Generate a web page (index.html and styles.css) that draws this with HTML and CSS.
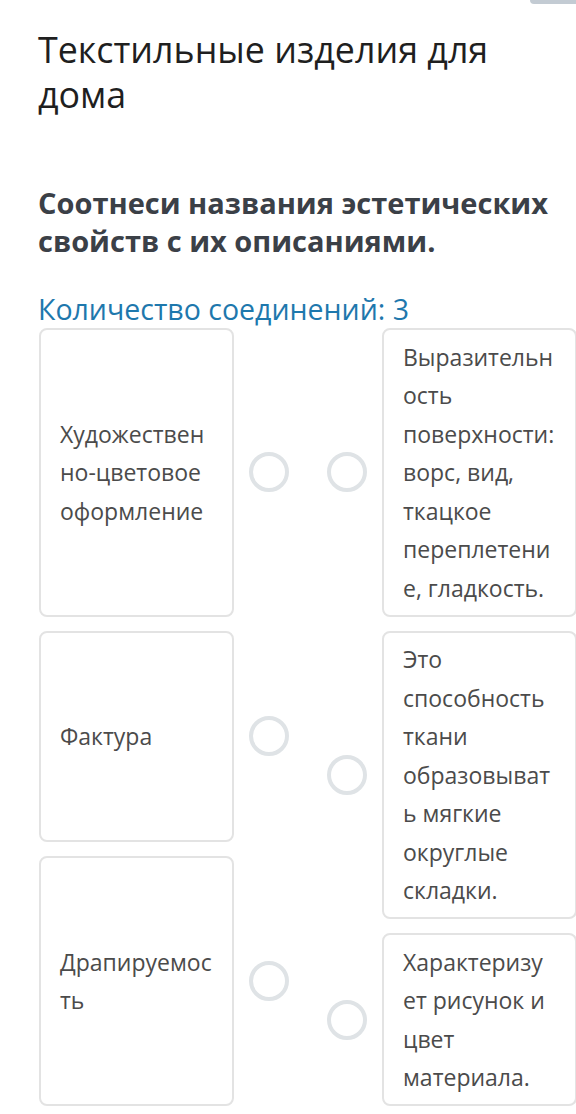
FILE: index.html
```html
<!DOCTYPE html>
<html lang="ru">
<head>
<meta charset="utf-8">
<link rel="stylesheet" href="styles.css">
</head>
<body>
<div class="page">
  <div class="topbar"><div class="tab"></div></div>
  <h1 class="title">Текстильные изделия для дома</h1>
  <h2 class="task">Соотнеси названия эстетических свойств с их описаниями.</h2>
  <div class="count">Количество соединений: 3</div>
  <div class="board">
    <div class="col">
      <div class="item">
        <div class="card"><span>Художественно-цветовое оформление</span></div>
        <div class="dot"></div>
      </div>
      <div class="item">
        <div class="card"><span>Фактура</span></div>
        <div class="dot"></div>
      </div>
      <div class="item">
        <div class="card"><span>Драпируемость</span></div>
        <div class="dot"></div>
      </div>
    </div>
    <div class="col col-right">
      <div class="item">
        <div class="dot"></div>
        <div class="card"><span>Выразительность поверхности: ворс, вид, ткацкое переплетение, гладкость.</span></div>
      </div>
      <div class="item">
        <div class="dot"></div>
        <div class="card"><span>Это способность ткани образовывать мягкие округлые складки.</span></div>
      </div>
      <div class="item">
        <div class="dot"></div>
        <div class="card"><span>Характеризует рисунок и цвет материала.</span></div>
      </div>
    </div>
  </div>
</div>
</body>
</html>
```

FILE: styles.css
```css
html, body {
  margin: 0;
  padding: 0;
  background: #ffffff;
}
body {
  font-family: "Open Sans", "Noto Sans", sans-serif;
  width: 576px;
  overflow: hidden;
}
.page {
  padding: 0 0 8px 38px;
}
.topbar {
  display: flex;
  justify-content: flex-end;
  height: 4px;
}
.tab {
  width: 46px;
  height: 4px;
  background: #c3cbd3;
  border-bottom-left-radius: 6px;
}
.title {
  margin: 23px 0 0 0;
  font-size: 35.8px;
  line-height: 45px;
  font-weight: 400;
  color: #1f1f1f;
  width: 510px;
}
.task {
  margin: 67px 0 0 0;
  font-size: 29px;
  line-height: 37.5px;
  font-weight: 700;
  color: #3b4047;
  width: 530px;
}
.count {
  margin-top: 33px;
  font-size: 28.5px;
  line-height: 34px;
  color: #1e78ad;
}
.board {
  display: flex;
  gap: 38px;
  margin-top: 2px;
  margin-left: 1px;
}
.col {
  display: flex;
  flex-direction: column;
  gap: 14px;
  width: 250px;
  flex: none;
}
.item {
  flex: 1 1 auto;
  display: flex;
  align-items: center;
  gap: 15px;
}
.card {
  align-self: stretch;
  width: 195px;
  box-sizing: border-box;
  flex: none;
  border: 2px solid #e3e3e3;
  border-radius: 8px;
  padding: 7.5px 17px 7.5px 19px;
  display: flex;
  align-items: center;
  font-size: 23px;
  line-height: 38.5px;
  color: #4b4b4b;
  overflow-wrap: anywhere;
}
.col-right .card {
  padding-right: 20.5px;
}
.dot {
  width: 40px;
  height: 40px;
  box-sizing: border-box;
  border: 4px solid #dfe3e6;
  border-radius: 50%;
  flex: none;
}
```
